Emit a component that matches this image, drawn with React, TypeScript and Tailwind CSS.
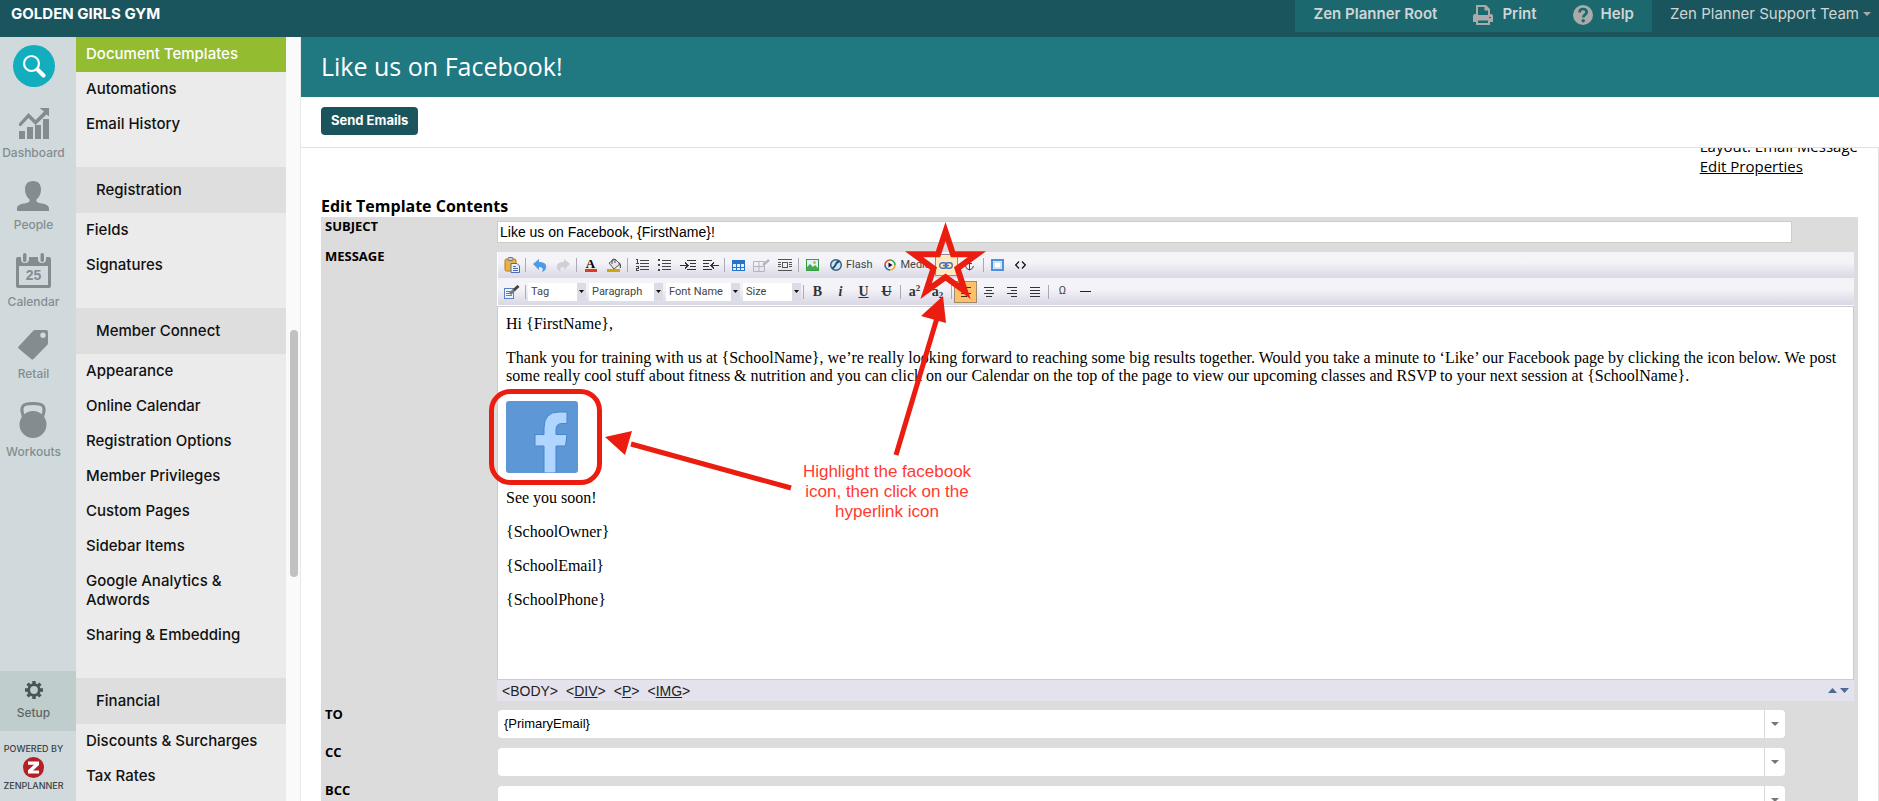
import React from 'react';

interface MenuSection {
  title?: string;
  items: string[];
}

const menu: MenuSection[] = [
  { items: ['Document Templates', 'Automations', 'Email History'] },
  { title: 'Registration', items: ['Fields', 'Signatures'] },
  {
    title: 'Member Connect',
    items: [
      'Appearance',
      'Online Calendar',
      'Registration Options',
      'Member Privileges',
      'Custom Pages',
      'Sidebar Items',
      'Google Analytics & Adwords',
      'Sharing & Embedding',
    ],
  },
  { title: 'Financial', items: ['Discounts & Surcharges', 'Tax Rates'] },
];

const signature = ['See you soon!', '{SchoolOwner}', '{SchoolEmail}', '{SchoolPhone}'];

function DashboardIcon() {
  return (
    <svg width="30" height="31" viewBox="0 0 30 31" fill="currentColor">
      <path d="M0 23h6v8H0zM8 19h6v12H8zM16 17h6v14h-6zM24 11h6v20h-6z" />
      <path d="M0 15.500 9.500 5l7 7L25 3.500 20.500 0H30v8.500l-2.500-2L16.500 17l-7-7L2 18H0z" />
    </svg>
  );
}

function PeopleIcon() {
  return (
    <svg width="32" height="30" viewBox="0 0 32 30" fill="currentColor">
      <path d="M16 0c5.500 0 8 3.500 8 8.500 0 4-1.500 7.500-4.500 10-.6 2 .5 3 3 3.500 6 1 9.500 2.200 9.500 5.500V30H0v-2.500C0 24.200 3.500 23 9.500 22c2.500-.5 3.600-1.500 3-3.500C9.500 16 8 12.500 8 8.500 8 3.500 10.500 0 16 0z" />
    </svg>
  );
}

function CalendarIcon() {
  return (
    <svg width="35" height="35" viewBox="0 0 35 35">
      <path
        fill="currentColor"
        fillRule="evenodd"
        d="M2 4h3v2a4 4 0 0 0 8 0V4h9v2a4 4 0 0 0 8 0V4h3a2 2 0 0 1 2 2v27a2 2 0 0 1-2 2H2a2 2 0 0 1-2-2V6a2 2 0 0 1 2-2zM3 13v19h29V13z"
      />
      <rect x="7" width="3.500" height="9" rx="1.700" fill="currentColor" />
      <rect x="24.500" width="3.500" height="9" rx="1.700" fill="currentColor" />
      <text
        x="17.500"
        y="27"
        textAnchor="middle"
        fill="currentColor"
        className="font-['Liberation_Sans'] text-[14px] font-bold"
      >
        25
      </text>
    </svg>
  );
}

function RetailIcon() {
  return (
    <svg width="30" height="30" viewBox="0 0 30 30" fill="currentColor">
      <path
        fillRule="evenodd"
        d="M15 1q.8-1 2-1h11q2 0 2 2v11q0 1.200-.8 2L15.500 29q-1.200 1-2.300 0L.6 18.500q-1-1 0-2zM25 2.500a2.700 2.700 0 1 0 0 5.400 2.700 2.700 0 0 0 0-5.400z"
      />
    </svg>
  );
}

function WorkoutsIcon() {
  return (
    <svg width="28" height="36" viewBox="0 0 28 36">
      <circle cx="14" cy="22.500" r="13.500" fill="currentColor" />
      <path
        d="M4.500 15C2.500 9 2 6.500 4 4c1.800-2.300 5-2.500 10-2.500S22.200 1.700 24 4c2 2.500 1.500 5-.5 11"
        fill="none"
        stroke="currentColor"
        strokeWidth="3"
      />
    </svg>
  );
}

function SearchIcon() {
  return (
    <svg width="24" height="24" viewBox="0 0 24 24" fill="none" stroke="#fff">
      <circle cx="9.500" cy="9.500" r="7.500" strokeWidth="2.200" />
      <path d="m15.500 15.500 6 6" strokeWidth="4" strokeLinecap="round" />
    </svg>
  );
}

function GearIcon() {
  return (
    <svg width="18" height="18" viewBox="0 0 18 18" className="text-[#4c5355]">
      <circle cx="9" cy="9" r="5.300" fill="none" stroke="currentColor" strokeWidth="2.800" />
      <path
        d="M9 0v3M9 15v3M0 9h3M15 9h3M2.600 2.600l2 2M13.400 13.400l2 2M2.600 15.400l2-2M13.400 4.600l2-2"
        stroke="currentColor"
        strokeWidth="3.400"
      />
    </svg>
  );
}

const nav = [
  { label: 'Dashboard', icon: <DashboardIcon /> },
  { label: 'People', icon: <PeopleIcon /> },
  { label: 'Calendar', icon: <CalendarIcon /> },
  { label: 'Retail', icon: <RetailIcon /> },
  { label: 'Workouts', icon: <WorkoutsIcon /> },
];

function Header() {
  return (
    <header className="flex h-[37px] shrink-0 items-start justify-between bg-[#1a555d] font-['Inter',sans-serif] text-[15px] leading-7 text-[#d0d5d6]">
      <span className="pl-[11px] font-bold text-white">GOLDEN GIRLS GYM</span>
      <div className="flex">
        <div className="flex h-8 gap-9 bg-[#1b686e] px-[18px] font-semibold">
          <a href="#root">Zen Planner Root</a>
          <a href="#print" className="flex gap-[9px]">
            <svg width="20" height="20" viewBox="0 0 20 20" className="mt-[5px] text-[#aaa]">
              <path
                fill="currentColor"
                fillRule="evenodd"
                d="M3 0h10l4 4v5h1a2 2 0 0 1 2 2v6h-3v3H3v-3H0v-6a2 2 0 0 1 2-2h1zM5 2v8h10V5.500h-3.500V2zM5 15.500V18h10v-2.500zM16 12v1h2v-1z"
              />
            </svg>
            Print
          </a>
          <a href="#help" className="flex gap-2">
            <svg width="20" height="20" viewBox="0 0 20 20" className="mt-[5px]">
              <circle cx="10" cy="10" r="10" fill="#aaa" />
              <path
                d="M6.500 7.500C6.500 5 8 4 10 4s3.700 1.200 3.700 3.200c0 2.300-3.500 2.600-3.500 5.300"
                fill="none"
                stroke="#1b686e"
                strokeWidth="2.600"
              />
              <circle cx="10.200" cy="15.800" r="1.700" fill="#1b686e" />
            </svg>
            Help
          </a>
        </div>
        <button className="flex h-7 items-center gap-1 pr-2 pl-[18px]">
          Zen Planner Support Team
          <svg width="8" height="4" viewBox="0 0 8 4" fill="#aaa">
            <path d="M0 0h8L4 4z" />
          </svg>
        </button>
      </div>
    </header>
  );
}

function Rail() {
  return (
    <nav className="flex w-[76px] shrink-0 flex-col justify-between bg-[#d0dadc] font-['Inter',sans-serif] text-xs leading-[14px] font-medium text-[#858c90]">
      <div className="flex w-[67px] flex-col items-center gap-[21px] pt-2">
        <button aria-label="Search" className="flex size-[42px] items-center justify-center rounded-full bg-[#12aebe]">
          <SearchIcon />
        </button>
        {nav.map(({ label, icon }) => (
          <a key={label} href={`#${label}`} className="flex flex-col items-center gap-[7px]">
            {icon}
            {label}
          </a>
        ))}
      </div>
      <div>
        <a href="#setup" className="flex h-[60px] flex-col bg-[#bfcdcc] pt-[10px] text-[#5f6668]">
          <span className="flex w-[67px] flex-col items-center gap-[7px]">
            <GearIcon />
            Setup
          </span>
        </a>
        <div className="flex h-[70px] w-[67px] flex-col items-center pt-[11px] text-[9px] leading-[14px] text-[#3c4244]">
          POWERED BY
          <svg width="21" height="21" viewBox="0 0 21 21" className="my-px">
            <circle cx="10.500" cy="10.500" r="10.500" fill="#b71f27" />
            <path d="M5 4.500h11V8l-6 5.500h6v3H5v-3.200L11 7.700H5z" fill="#fff" />
          </svg>
          ZENPLANNER
        </div>
      </div>
    </nav>
  );
}

function Menu() {
  return (
    <div className="flex w-[225px] shrink-0 overflow-hidden border-r border-[#e8e8e8] bg-[#fafafa]">
      <div className="w-[210px] bg-[#ebebeb] font-['Inter',sans-serif] text-[15px] leading-[19px] font-medium text-[#111]">
        {menu.map((section, i) => (
          <div key={i} className="pb-[25px]">
            {section.title && <h2 className="bg-[#dedede] py-[13px] pl-5 leading-5">{section.title}</h2>}
            {section.items.map((item) => (
              <a
                key={item}
                href={`#${item}`}
                className={
                  item === 'Document Templates'
                    ? 'block bg-[#93bc31] pt-[7px] pb-[9px] pl-[10px] text-white'
                    : 'block pt-[7px] pr-6 pb-[9px] pl-[10px]'
                }
              >
                {item}
              </a>
            ))}
          </div>
        ))}
      </div>
      <div className="pl-1">
        <div className="mt-[293px] h-[247px] w-2 rounded-full bg-[#c1c1c1]" />
      </div>
    </div>
  );
}

function Sep() {
  return <span className="mx-[2px] h-[14px] w-px shrink-0 bg-[#a9a9b8]" />;
}

interface ToolProps {
  label: string;
  active?: 'hover' | 'on';
  children: React.ReactNode;
}

function Tool({ label, active, children }: ToolProps) {
  const state =
    active === 'hover'
      ? 'border border-[#8a8d99] bg-[#ffe9bd]'
      : active === 'on'
        ? 'border border-[#9c8a6b] bg-[#ffc06a]'
        : '';
  return (
    <button title={label} className={`flex h-[22px] w-[23px] shrink-0 items-center justify-center ${state}`}>
      {children}
    </button>
  );
}

function Glyph({ d, color = '#333' }: { d: string; color?: string }) {
  return (
    <svg width="16" height="14" viewBox="0 0 16 14" fill="none" stroke={color} shapeRendering="crispEdges">
      <path d={d} />
    </svg>
  );
}

function Picker({ label, className }: { label: string; className: string }) {
  return (
    <div className={`relative flex h-[18px] shrink-0 bg-white ${className}`}>
      <select
        aria-label={label}
        className="w-full appearance-none pl-[3px] font-['Roboto',sans-serif] text-[11px] leading-[18px] text-[#444] outline-none"
      >
        <option>{label}</option>
      </select>
      <span className="pointer-events-none absolute inset-y-0 right-0 flex w-[9px] items-center justify-center bg-[#dcdbe6]">
        <svg width="5" height="3" viewBox="0 0 5 3">
          <path d="M0 0h5L2.500 3z" fill="#111" />
        </svg>
      </span>
    </div>
  );
}

function Toolbar() {
  const row = 'flex items-center bg-linear-to-b from-[#f3f3f8] from-40% to-[#d9d8e4] pl-[2px]';
  return (
    <div className="border-b border-l border-white font-['Roboto',sans-serif] text-[11px] text-[#444]">
      <div className={`h-[26px] ${row}`}>
        <Tool label="Paste">
          <svg width="16" height="16" viewBox="0 0 16 16">
            <rect x="1" y="2" width="11" height="12" rx="1.500" fill="#eeb23c" stroke="#b17a1c" />
            <rect x="4" y="0.500" width="5" height="3" rx="1" fill="#c9ccd4" stroke="#737780" />
            <path d="M7 6.500h6l2.500 2.500v6.500H7z" fill="#eaf1fc" stroke="#4a6fae" />
            <path d="M9 9.500h3M9 11.500h5M9 13.500h5" stroke="#4a6fae" />
          </svg>
        </Tool>
        <Sep />
        <Tool label="Undo">
          <svg width="14" height="13" viewBox="0 0 14 13">
            <path d="M0 5 6 0v3c5 0 8 2 7 6-.5 2-2 3.500-4 4 1.500-2.500 1-5-3-5v3z" fill="#4b9be8" />
          </svg>
        </Tool>
        <Tool label="Redo">
          <svg width="14" height="13" viewBox="0 0 14 13">
            <path d="M14 5 8 0v3c-5 0-8 2-7 6 .5 2 2 3.500 4 4-1.500-2.500-1-5 3-5v3z" fill="#cfcfd4" />
          </svg>
        </Tool>
        <Sep />
        <Tool label="Font color">
          <span className="flex flex-col items-center font-['Liberation_Serif',serif] text-[13px] leading-[10px] font-bold text-black">
            A
            <span className="h-[3px] w-3 bg-[#e03a1e]" />
          </span>
        </Tool>
        <Tool label="Highlight color">
          <svg width="14" height="14" viewBox="0 0 14 14">
            <path d="M2 5 8 1l5 5-6 5z" fill="#e4e7e6" stroke="#555" />
            <path d="M5 6V2q1-2 3 0v3" fill="none" stroke="#555" />
            <path d="M12 5q2 2 1.500 5" fill="none" stroke="#555" strokeWidth="1.500" />
            <path d="M0 11h13v3H0z" fill="#d3a500" />
          </svg>
        </Tool>
        <Sep />
        <Tool label="Numbered list">
          <svg width="14" height="12" viewBox="0 0 14 12" shapeRendering="crispEdges">
            <path d="M5 1.500h9M5 4.500h9M5 7.500h9M5 10.500h9" stroke="#444" />
            <path d="M1 .5h1.500v4M1 4.500h3M.5 7.500h3v2H1v2h3" stroke="#444" fill="none" />
          </svg>
        </Tool>
        <Tool label="Bulleted list">
          <svg width="13" height="12" viewBox="0 0 13 12" shapeRendering="crispEdges">
            <path d="M4 1.500h9M4 4.500h9M4 7.500h9M4 10.500h9" stroke="#444" />
            <path d="M0 0h2v2H0zM0 5h2v2H0zM0 10h2v2H0z" fill="#444" />
          </svg>
        </Tool>
        <Tool label="Indent">
          <Glyph d="M7 2.500h9M10 5.500h6M10 8.500h6M7 11.500h9M0 7.500h8M5 4.500l3 3-3 3" />
        </Tool>
        <Tool label="Outdent">
          <Glyph d="M0 2.500h9M0 5.500h6M0 8.500h6M0 11.500h9M8 7.500h8M11 4.500l-3 3 3 3" />
        </Tool>
        <Sep />
        <Tool label="Insert table">
          <svg width="13" height="11" viewBox="0 0 13 11" shapeRendering="crispEdges">
            <rect width="13" height="11" fill="#2672c9" />
            <path d="M1 4h3v3H1zM5 4h3v3H5zM9 4h3v3H9zM1 8h3v2H1zM5 8h3v2H5zM9 8h3v2H9z" fill="#e3effc" />
          </svg>
        </Tool>
        <Tool label="Edit table">
          <svg width="18" height="14" viewBox="0 0 18 14" fill="none" stroke="#b5b5bd">
            <path d="M.5 3.500h11v10H.5zM6 3.500v10M.5 8.500h11" />
            <path d="m10 7 6-5" strokeWidth="2.500" />
          </svg>
        </Tool>
        <Tool label="Text box">
          <svg width="14" height="12" viewBox="0 0 14 12" fill="none" stroke="#555" shapeRendering="crispEdges">
            <path d="M0 .5h14M0 11.500h14M0 3.500h3M0 5.500h3M0 7.500h3M11 3.500h3M11 5.500h3M11 7.500h3" />
            <path d="M4.500 3.500h5v5h-5z" />
          </svg>
        </Tool>
        <Sep />
        <Tool label="Image">
          <svg width="13" height="12" viewBox="0 0 13 12">
            <rect x=".5" y=".5" width="12" height="11" fill="#dff1fb" stroke="#3a9a47" />
            <path d="M1 11V8l3-3 3 3 2-2 3 3v2z" fill="#43ad45" />
            <circle cx="8.500" cy="3.500" r="1.500" fill="#eda924" />
          </svg>
        </Tool>
        <button className="flex items-center gap-1 px-[6px]">
          <svg width="12" height="12" viewBox="0 0 12 12">
            <circle cx="6" cy="6" r="5.300" fill="#cfe4f2" stroke="#2c5e80" strokeWidth="1.400" />
            <path d="M9.500 2.500Q7 2.500 6 5T2.500 9.500" fill="none" stroke="#1f4a6b" strokeWidth="2" />
          </svg>
          Flash
        </button>
        <button className="flex items-center gap-1 pr-1 pl-[6px]">
          <svg width="12" height="12" viewBox="0 0 12 12" fill="none" strokeWidth="1.600">
            <path d="M1 6a5 5 0 0 1 5-5" stroke="#e0452c" />
            <path d="M6 1a5 5 0 0 1 5 5" stroke="#3a9a47" />
            <path d="M11 6a5 5 0 0 1-5 5" stroke="#eda924" />
            <path d="M6 11a5 5 0 0 1-5-5" stroke="#315fc4" />
            <path d="M4.500 3.500v5l4-2.500z" fill="#111" />
          </svg>
          Media
        </button>
        <Tool label="Hyperlink" active="hover">
          <svg width="14" height="7" viewBox="0 0 14 7" fill="none" stroke="#4a74b8" strokeWidth="1.400">
            <rect x=".7" y=".7" width="7" height="5.500" rx="2.700" />
            <rect x="6.300" y=".7" width="7" height="5.500" rx="2.700" />
            <path d="M4 3.500h6" />
          </svg>
        </Tool>
        <Tool label="Anchor">
          <svg width="9" height="12" viewBox="0 0 9 12" fill="none" stroke="#444">
            <path d="M4.500 3v8M2 4.500h5M.5 7q.5 3 4 4 3.500-1 4-4" />
            <circle cx="4.500" cy="2" r="1.300" />
          </svg>
        </Tool>
        <Sep />
        <Tool label="Full screen">
          <svg width="13" height="12" viewBox="0 0 13 12">
            <rect x="1" y="1" width="11" height="10" fill="#fff" stroke="#4f8fdc" strokeWidth="2" />
            <rect x="3" y="3" width="7" height="6" fill="none" stroke="#a8cdf3" />
          </svg>
        </Tool>
        <Tool label="Source">
          <svg width="11" height="8" viewBox="0 0 11 8" fill="none" stroke="#111" strokeWidth="1.200">
            <path d="M4 .5.700 4 4 7.500M7 .5 10.300 4 7 7.500" />
          </svg>
        </Tool>
      </div>
      <div className={`h-[27px] ${row}`}>
        <Tool label="Styles">
          <svg width="16" height="14" viewBox="0 0 16 14">
            <rect x=".5" y="3.500" width="9" height="10" fill="#eef3fc" stroke="#5c80c4" />
            <path d="M2 6.500h6M2 8.500h5M2 10.500h6" stroke="#5c80c4" />
            <path d="m6 9 5-5" stroke="#777" strokeWidth="3" />
            <path d="m10 5 4.500-4" stroke="#444" strokeWidth="3" />
          </svg>
        </Tool>
        <Sep />
        <div className="flex gap-[3px]">
          <Picker label="Tag" className="w-[58px]" />
          <Picker label="Paragraph" className="w-[74px]" />
          <Picker label="Font Name" className="w-[74px]" />
          <Picker label="Size" className="w-[58px]" />
        </div>
        <Sep />
        <div className="flex font-['Liberation_Serif',serif] text-[14px] leading-4 font-bold text-[#333]">
          <Tool label="Bold">B</Tool>
          <Tool label="Italic">
            <i>i</i>
          </Tool>
          <Tool label="Underline">
            <u>U</u>
          </Tool>
          <Tool label="Strikethrough">
            <s>U</s>
          </Tool>
        </div>
        <Sep />
        <div className="flex font-['Liberation_Serif',serif] text-[14px] leading-4 font-bold text-[#333]">
          <Tool label="Superscript">
            <span>
              a<sup className="text-[9px]">2</sup>
            </span>
          </Tool>
          <Tool label="Subscript">
            <span>
              a<sub className="text-[9px]">2</sub>
            </span>
          </Tool>
        </div>
        <Sep />
        <Tool label="Align left" active="on">
          <Glyph d="M3 2.500h10M3 5.500h6M3 8.500h10M3 11.500h6" />
        </Tool>
        <Tool label="Align center">
          <Glyph d="M3 2.500h10M5 5.500h6M3 8.500h10M5 11.500h6" />
        </Tool>
        <Tool label="Align right">
          <Glyph d="M3 2.500h10M7 5.500h6M3 8.500h10M7 11.500h6" />
        </Tool>
        <Tool label="Justify">
          <Glyph d="M3 2.500h10M3 5.500h10M3 8.500h10M3 11.500h10" />
        </Tool>
        <Sep />
        <Tool label="Special character">Ω</Tool>
        <Tool label="Horizontal rule">
          <span className="h-px w-[11px] bg-[#222]" />
        </Tool>
      </div>
    </div>
  );
}

function FacebookLogo() {
  return (
    <svg width="72" height="72" viewBox="0 0 72 72">
      <rect width="72" height="72" rx="3" fill="#5e97d6" />
      <path
        d="M38 72V45h-9V33.500h9V27q0-16 15-16h8v11.500h-5q-6 0-6 6v5h11L59.500 45H50v27z"
        fill="#b0d5ff"
        stroke="#4485cc"
      />
    </svg>
  );
}

// Red callouts drawn over the editor
function Annotations() {
  return (
    <div className="pointer-events-none absolute inset-0">
      <svg width="500" height="260" className="overflow-visible" fill="none" stroke="#eb1c10">
        <path
          d="M448.500-20.500 456 2.300h23.900l-19.400 14.100 7.400 22.800-19.400-14.100-19.400 14.100 7.400-22.800-19.400-14.100H441z"
          strokeWidth="6"
          strokeMiterlimit="8"
        />
        <rect x="-5.500" y="139.500" width="108" height="91" rx="19" strokeWidth="5" />
        <path d="M399 203 440 66M294 236 134 192" strokeWidth="5" />
        <path d="m446 44 3 27-25-7zM108 185l27-6-7 24z" fill="#eb1c10" stroke="none" />
      </svg>
      <p className="absolute top-[210px] left-[300px] w-[180px] text-center font-['Liberation_Sans',sans-serif] text-[17px] leading-5 text-[#ff3a30]">
        Highlight the facebook icon, then click on the hyperlink icon
      </p>
    </div>
  );
}

function Editor() {
  return (
    <div className="relative mr-1">
      <Toolbar />
      <div className="min-h-[374px] border border-[#ccc] bg-white px-2 pt-2 font-['Liberation_Serif',serif] text-base leading-[18px] text-black">
        <p className="mb-4">Hi {'{FirstName}'},</p>
        <p className="mb-4">
          Thank you for training with us at {'{SchoolName}'}, we’re really looking forward to reaching some big results
          together. Would you take a minute to ‘Like’ our Facebook page by clicking the icon below. We post some really
          cool stuff about fitness &amp; nutrition and you can click on our Calendar on the top of the page to view our
          upcoming classes and RSVP to your next session at {'{SchoolName}'}.
        </p>
        <div className="mb-4">
          <FacebookLogo />
        </div>
        {signature.map((line) => (
          <p key={line} className="mb-4">
            {line}
          </p>
        ))}
      </div>
      <div className="flex h-[21px] items-center justify-between bg-[#e4e2ed] px-[5px] font-['Liberation_Sans',sans-serif] text-sm text-[#222]">
        <div className="flex gap-2">
          <span>&lt;BODY&gt;</span>
          <span>
            &lt;<a href="#div" className="underline">DIV</a>&gt;
          </span>
          <span>
            &lt;<a href="#p" className="underline">P</a>&gt;
          </span>
          <span>
            &lt;<a href="#img" className="underline">IMG</a>&gt;
          </span>
        </div>
        <svg width="21" height="5" viewBox="0 0 21 5" fill="#4d6a94">
          <path d="M0 5h9L4.500 0zM12 0h9l-4.500 5z" />
        </svg>
      </div>
      <Annotations />
    </div>
  );
}

function Combo({ id, label, value }: { id: string; label: string; value?: string }) {
  return (
    <div className="flex">
      <label htmlFor={id} className="w-[177px] shrink-0 pl-1 leading-[18px] font-bold">
        {label}
      </label>
      <div className="mt-[5px] mr-[73px] mb-[5px] flex h-7 grow overflow-hidden rounded-sm bg-white">
        <input
          id={id}
          defaultValue={value}
          className="grow px-[6px] font-['Liberation_Sans',sans-serif] text-[13px] outline-none"
        />
        <button aria-label={`Show ${label} options`} className="flex w-[21px] items-center justify-center border-l border-[#d8d8d8]">
          <svg width="8" height="4" viewBox="0 0 8 4" fill="#777">
            <path d="M0 0h8L4 4z" />
          </svg>
        </button>
      </div>
    </div>
  );
}

export default function App() {
  return (
    <div className="flex h-screen flex-col overflow-hidden bg-white">
      <Header />
      <div className="flex min-h-0 grow">
        <Rail />
        <Menu />
        <main className="flex min-w-0 grow flex-col font-['Open_Sans',sans-serif]">
          <h1 className="flex h-[60px] shrink-0 items-center bg-[#207880] pl-5 text-[25px] text-white">
            Like us on Facebook!
          </h1>
          <div className="flex h-[51px] shrink-0 items-start border-b border-[#e0e0e0] px-5 pt-[10px]">
            <button className="h-7 rounded-sm bg-[#1a555d] px-[10px] font-['Inter',sans-serif] text-[13px] font-bold text-white">
              Send Emails
            </button>
          </div>
          <div className="min-h-0 grow overflow-hidden border-r border-[#e0e0e0] pr-5 pl-5">
            <div className="-mt-3 flex justify-end text-[15px] leading-5">
              <div>
                <p>Layout: Email Message</p>
                <a href="#properties" className="underline">
                  Edit Properties
                </a>
              </div>
            </div>
            <h2 className="mt-[19px] text-base leading-[22px] font-bold">Edit Template Contents</h2>
            <form className="bg-[#dcdcdc] text-[13px]">
              <div className="flex h-[30px]">
                <label htmlFor="subject" className="w-[176px] shrink-0 pl-1 leading-[18px] font-bold">
                  SUBJECT
                </label>
                <input
                  id="subject"
                  defaultValue="Like us on Facebook, {FirstName}!"
                  className="mt-1 mr-[66px] h-[22px] grow border border-[#ccc] bg-white px-[2px] font-['Liberation_Sans',sans-serif] text-sm outline-none"
                />
              </div>
              <div className="flex pt-[5px]">
                <span className="w-[176px] shrink-0 pl-1 leading-2 font-bold">MESSAGE</span>
                <div className="min-w-0 grow">
                  <Editor />
                </div>
              </div>
              <div className="pt-1">
                <Combo id="to" label="TO" value="{PrimaryEmail}" />
                <Combo id="cc" label="CC" />
                <Combo id="bcc" label="BCC" />
              </div>
            </form>
          </div>
        </main>
      </div>
    </div>
  );
}
